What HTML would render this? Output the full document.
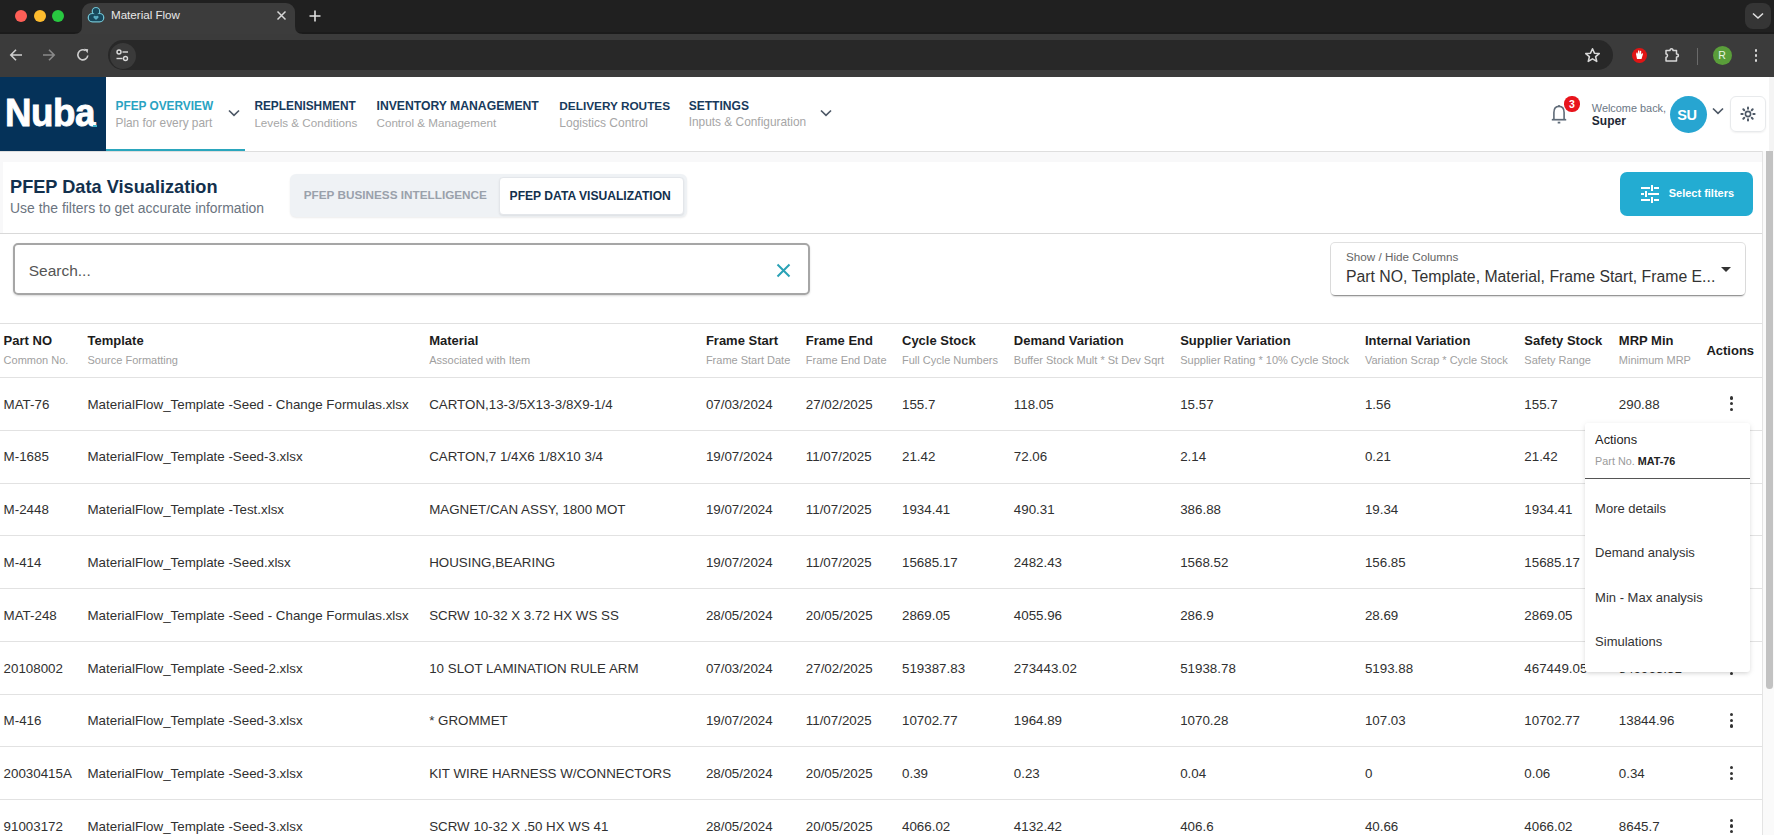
<!DOCTYPE html>
<html><head><meta charset="utf-8"><title>Material Flow</title>
<style>
html,body{margin:0;padding:0;width:1774px;height:835px;overflow:hidden;background:#fff;}
body{position:relative;font-family:"Liberation Sans",sans-serif;}
.t{position:absolute;white-space:nowrap;line-height:1;}
.r{position:absolute;}
svg.r{overflow:visible;}
</style></head><body>
<div class="r" style="left:0px;top:0px;width:1774px;height:34px;background:#202020"></div>
<div class="r" style="left:0px;top:32px;width:1774px;height:2px;background:#1b1b1b"></div>
<div class="r" style="left:15px;top:10px;width:12px;height:12px;background:#ff5f57;border-radius:50%"></div>
<div class="r" style="left:33.5px;top:10px;width:12px;height:12px;background:#febc2e;border-radius:50%"></div>
<div class="r" style="left:52px;top:10px;width:12px;height:12px;background:#28c840;border-radius:50%"></div>
<div class="r" style="left:82px;top:3px;width:213px;height:35px;background:#3c3c3c;border-radius:9px 9px 0 0"></div>
<svg class="r" style="left:74px;top:26px" width="8" height="8"><path d="M0 8 Q8 8 8 0 L8 8 Z" fill="#3c3c3c"/></svg>
<svg class="r" style="left:295px;top:26px" width="8" height="8"><path d="M8 8 Q0 8 0 0 L0 8 Z" fill="#3c3c3c"/></svg>
<svg class="r" style="left:87px;top:7px" width="18" height="16" viewBox="0 0 18 16">
<circle cx="9" cy="4.3" r="3.7" fill="#17485c" stroke="#6fc0d0" stroke-width="1.3"/>
<rect x="1.3" y="6.6" width="15.4" height="8.2" rx="4" fill="#17485c" stroke="#6fc0d0" stroke-width="1.3"/>
<circle cx="9" cy="4.3" r="3" fill="#17485c"/>
<rect x="2" y="7.3" width="14" height="6.8" rx="3.4" fill="#17485c"/>
<circle cx="7.8" cy="10" r="1.3" fill="#5aaec4"/><circle cx="10.2" cy="10" r="1.3" fill="#5aaec4"/>
<path d="M6.6 10.4 L9 13 L11.4 10.4 Z" fill="#5aaec4"/></svg>
<div class="t " style="left:111.00px;top:9.38px;font-size:11.6px;font-weight:400;color:#e8e8e8;">Material Flow</div>
<svg class="r" style="left:276px;top:10px" width="11" height="11"><path d="M1.5 1.5 L9.5 9.5 M9.5 1.5 L1.5 9.5" stroke="#d8d8d8" stroke-width="1.5"/></svg>
<svg class="r" style="left:309px;top:10px" width="12" height="12"><path d="M6 0.5 V11.5 M0.5 6 H11.5" stroke="#e0e0e0" stroke-width="1.6"/></svg>
<div class="r" style="left:1745px;top:3px;width:26px;height:26px;background:#353535;border-radius:8px"></div>
<svg class="r" style="left:1752px;top:12px" width="12" height="8"><path d="M1 1.5 L6 6 L11 1.5" stroke="#e0e0e0" stroke-width="1.6" fill="none"/></svg>
<div class="r" style="left:0px;top:34px;width:1774px;height:43px;background:#3b3b3b"></div>
<div class="r" style="left:108px;top:40px;width:1505px;height:30px;background:#282828;border-radius:15px"></div>
<svg class="r" style="left:9px;top:48px" width="14" height="14"><path d="M13 7 H2 M7 1.8 L1.8 7 L7 12.2" stroke="#cfcfcf" stroke-width="1.6" fill="none"/></svg>
<svg class="r" style="left:42px;top:48px" width="14" height="14"><path d="M1 7 H12 M7 1.8 L12.2 7 L7 12.2" stroke="#8a8a8a" stroke-width="1.6" fill="none"/></svg>
<svg class="r" style="left:76px;top:48px" width="14" height="14"><path d="M11.8 7.5 A5 5 0 1 1 9.5 2.6" stroke="#cfcfcf" stroke-width="1.6" fill="none"/><path d="M8 0.8 L12.2 1.2 L11.6 5.2 Z" fill="#cfcfcf"/></svg>
<div class="r" style="left:109.5px;top:42.5px;width:26px;height:26px;background:#3a3a3a;border-radius:50%"></div>
<svg class="r" style="left:115px;top:48px" width="15" height="15"><circle cx="4" cy="4" r="2" stroke="#dadada" stroke-width="1.4" fill="none"/><path d="M7.5 4 H13" stroke="#dadada" stroke-width="1.4"/><circle cx="10.5" cy="10.5" r="2" stroke="#dadada" stroke-width="1.4" fill="none"/><path d="M1.5 10.5 H7.5" stroke="#dadada" stroke-width="1.4"/></svg>
<svg class="r" style="left:1584px;top:47px" width="17" height="17" viewBox="0 0 24 24"><path d="M12 2.5 L14.8 8.7 L21.5 9.3 L16.4 13.7 L18 20.3 L12 16.8 L6 20.3 L7.6 13.7 L2.5 9.3 L9.2 8.7 Z" stroke="#d8d8d8" stroke-width="2.2" fill="none" stroke-linejoin="round"/></svg>
<div class="r" style="left:1631.5px;top:47.5px;width:15px;height:15px;background:#e01515;border-radius:50%"></div>
<svg class="r" style="left:1634px;top:49px" width="10" height="11"><path d="M3 10 L2 5 L3 3 L4 5 L4 1.5 L5.3 1.5 L5.5 5 L6 1.8 L7.2 2 L7.2 5.5 L8.4 4 L9 5 L7.5 10 Z" fill="#fff"/></svg>
<svg class="r" style="left:1664px;top:46px" width="18" height="18" viewBox="0 0 18 18"><path d="M2 4.5 H6 C6 2 9 2 9 4.5 H12.5 V8 C15 8 15 11 12.5 11 V15 H2 V11.2 C4 11.2 4 8 2 8 Z" stroke="#d8d8d8" stroke-width="1.5" fill="none" stroke-linejoin="round"/></svg>
<div class="r" style="left:1697px;top:48px;width:1px;height:17px;background:#6a6a6a"></div>
<div class="r" style="left:1712.5px;top:45.5px;width:19px;height:19px;background:#5a9e3a;border-radius:50%"></div>
<div class="t " style="left:1718.20px;top:50.41px;font-size:10.5px;font-weight:400;color:#e8f5e0;">R</div>
<div class="r" style="left:1754.5px;top:49px;width:2.6px;height:2.6px;background:#d8d8d8;border-radius:50%"></div>
<div class="r" style="left:1754.5px;top:54px;width:2.6px;height:2.6px;background:#d8d8d8;border-radius:50%"></div>
<div class="r" style="left:1754.5px;top:59px;width:2.6px;height:2.6px;background:#d8d8d8;border-radius:50%"></div>
<div class="r" style="left:0px;top:77px;width:1774px;height:74px;background:#fff"></div>
<div class="r" style="left:0px;top:151px;width:1774px;height:1px;background:#dedede"></div>
<div class="r" style="left:1768.5px;top:77px;width:5.5px;height:74px;background:#f4f4f4"></div>
<div class="r" style="left:0px;top:77px;width:106px;height:74px;background:#053259"></div>
<div class="t " style="left:4.60px;top:93.16px;font-size:39.5px;font-weight:700;color:#fff;letter-spacing:-0.5px;-webkit-text-stroke:0.9px #fff;transform:scaleX(0.93);transform-origin:0 0;">Nuba</div>
<div class="r" style="left:93px;top:124.5px;width:4px;height:2px;background:#3fb3c9"></div>
<div class="t " style="left:115.50px;top:100.97px;font-size:11.85px;font-weight:700;color:#29a3c2;">PFEP OVERVIEW</div>
<div class="t " style="left:115.50px;top:117.77px;font-size:11.85px;font-weight:400;color:#a6a6a6;">Plan for every part</div>
<div class="t " style="left:254.40px;top:100.97px;font-size:11.85px;font-weight:700;color:#173a5c;">REPLENISHMENT</div>
<div class="t " style="left:254.40px;top:117.34px;font-size:11.65px;font-weight:400;color:#a6a6a6;">Levels &amp; Conditions</div>
<div class="t " style="left:376.50px;top:100.17px;font-size:12.2px;font-weight:700;color:#173a5c;">INVENTORY MANAGEMENT</div>
<div class="t " style="left:376.50px;top:117.34px;font-size:11.65px;font-weight:400;color:#a6a6a6;">Control &amp; Management</div>
<div class="t " style="left:559.30px;top:101.01px;font-size:11.8px;font-weight:700;color:#173a5c;">DELIVERY ROUTES</div>
<div class="t " style="left:559.30px;top:117.04px;font-size:12.0px;font-weight:400;color:#a6a6a6;">Logistics Control</div>
<div class="t " style="left:688.70px;top:100.30px;font-size:12.05px;font-weight:700;color:#173a5c;">SETTINGS</div>
<div class="t " style="left:688.70px;top:117.14px;font-size:11.88px;font-weight:400;color:#a6a6a6;">Inputs &amp; Configuration</div>
<div class="r" style="left:106px;top:149px;width:139px;height:2px;background:#2aa6bd"></div>
<svg class="r" style="left:228px;top:109px" width="12" height="8"><path d="M1 1.5 L6 6.3 L11 1.5" stroke="#4d5866" stroke-width="1.7" fill="none"/></svg>
<svg class="r" style="left:820px;top:109px" width="12" height="8"><path d="M1 1.5 L6 6.3 L11 1.5" stroke="#4d5866" stroke-width="1.7" fill="none"/></svg>
<svg class="r" style="left:1551px;top:104px" width="16" height="20" viewBox="0 0 16 20"><path d="M2.9 15.7 V8.6 C2.9 4.9 4.9 2.4 8 2.4 C11.1 2.4 13.1 4.9 13.1 8.6 V15.7" stroke="#5f6b78" stroke-width="1.6" fill="none"/><path d="M0.8 15.7 H15.2" stroke="#5f6b78" stroke-width="1.7"/><path d="M6.7 18.6 H9.3" stroke="#5f6b78" stroke-width="1.8"/><path d="M8 1 V2.6" stroke="#5f6b78" stroke-width="1.6"/></svg>
<div class="r" style="left:1564.4px;top:96.4px;width:15.2px;height:15.2px;background:#e8141c;border-radius:50%"></div>
<div class="t " style="left:1568.90px;top:99.11px;font-size:10.5px;font-weight:700;color:#fff;">3</div>
<div class="t " style="left:1591.80px;top:102.97px;font-size:10.9px;font-weight:400;color:#6b7785;">Welcome back,</div>
<div class="t " style="left:1591.80px;top:114.94px;font-size:12px;font-weight:700;color:#1d2733;">Super</div>
<div class="r" style="left:1670.3px;top:95.8px;width:37.2px;height:37.2px;background:#27a5d1;border-radius:50%"></div>
<div class="t " style="left:1677.20px;top:107.93px;font-size:14.5px;font-weight:700;color:#fff;letter-spacing:-0.3px;">SU</div>
<svg class="r" style="left:1712px;top:107px" width="12" height="8"><path d="M1 1.5 L6 6.3 L11 1.5" stroke="#4d5866" stroke-width="1.7" fill="none"/></svg>
<div class="r" style="left:1730.2px;top:95.8px;width:35.8px;height:36.2px;border:1.5px solid #e8eaec;border-radius:6px;box-sizing:border-box;box-shadow:0 1px 2px rgba(0,0,0,0.06)"></div>
<svg class="r" style="left:1739.1px;top:105.1px" width="18" height="18" viewBox="0 0 18 18"><circle cx="9" cy="9" r="2.6" stroke="#4d5866" stroke-width="1.6" fill="none"/><g stroke="#4d5866" stroke-width="2" stroke-linecap="round"><path d="M14.30 9.00 L15.60 9.00"/><path d="M12.75 12.75 L13.67 13.67"/><path d="M9.00 14.30 L9.00 15.60"/><path d="M5.25 12.75 L4.33 13.67"/><path d="M3.70 9.00 L2.40 9.00"/><path d="M5.25 5.25 L4.33 4.33"/><path d="M9.00 3.70 L9.00 2.40"/><path d="M12.75 5.25 L13.67 4.33"/></g></svg>
<div class="r" style="left:0px;top:152px;width:1762px;height:10px;background:#f8f8f9"></div>
<div class="r" style="left:0px;top:162px;width:1762px;height:71px;background:#fff"></div>
<div class="r" style="left:0px;top:162px;width:3px;height:71px;background:#f8f8f9"></div>
<div class="r" style="left:0px;top:232.5px;width:1762px;height:1.5px;background:#d9d9d9"></div>
<div class="t " style="left:10.00px;top:178.19px;font-size:18.2px;font-weight:700;color:#12304d;">PFEP Data Visualization</div>
<div class="t " style="left:10.00px;top:202.09px;font-size:13.95px;font-weight:400;color:#6b7480;">Use the filters to get accurate information</div>
<div class="r" style="left:289.5px;top:173.5px;width:397px;height:43.5px;background:#eff2f5;border-radius:6px;box-shadow:0 1px 2px rgba(0,0,0,0.08)"></div>
<div class="r" style="left:499px;top:177px;width:184.5px;height:38px;background:#fff;border:1px solid #e3e6ea;box-sizing:border-box;border-radius:4px;box-shadow:0 1px 2px rgba(0,0,0,0.08)"></div>
<div class="t " style="left:303.70px;top:189.45px;font-size:11.75px;font-weight:700;color:#9aa1ab;">PFEP BUSINESS INTELLIGENCE</div>
<div class="t " style="left:509.60px;top:190.26px;font-size:12.1px;font-weight:700;color:#12304d;">PFEP DATA VISUALIZATION</div>
<div class="r" style="left:1620px;top:172px;width:133px;height:44px;background:#23acd2;border-radius:7px"></div>
<svg class="r" style="left:1641px;top:185px" width="18" height="18" viewBox="0 0 18 18"><g stroke="#fff" stroke-width="2"><path d="M0 3 H9 M13 3 H18"/><path d="M11 0 V6"/><path d="M0 9 H3 M7 9 H18"/><path d="M5 6 V12"/><path d="M0 15 H9 M13 15 H18"/><path d="M11 12 V18"/></g></svg>
<div class="t " style="left:1668.70px;top:188.49px;font-size:11px;font-weight:700;color:#fff;">Select filters</div>
<div class="r" style="left:0px;top:234px;width:1762px;height:89px;background:#fff"></div>
<div class="r" style="left:13.2px;top:243.4px;width:797.2px;height:51.6px;border:2px solid #a6a6a6;border-radius:5px;box-sizing:border-box;box-shadow:0 1px 2px rgba(0,0,0,0.15)"></div>
<div class="t " style="left:28.70px;top:262.58px;font-size:15.5px;font-weight:400;color:#555;">Search...</div>
<svg class="r" style="left:776px;top:262.5px" width="15" height="15"><path d="M1.5 1.5 L13.5 13.5 M13.5 1.5 L1.5 13.5" stroke="#2aa2b6" stroke-width="2"/></svg>
<div class="r" style="left:1330.5px;top:242.5px;width:414px;height:52.5px;background:#fff;border-radius:4px;box-shadow:0 2px 2px -1px rgba(0,0,0,0.45),0 0 0 1px rgba(0,0,0,0.12)"></div>
<div class="t " style="left:1346.00px;top:251.40px;font-size:11.7px;font-weight:400;color:#666;">Show / Hide Columns</div>
<div class="t " style="left:1346.00px;top:268.53px;font-size:15.8px;font-weight:400;color:#333;">Part NO, Template, Material, Frame Start, Frame E...</div>
<svg class="r" style="left:1720.5px;top:267px" width="10" height="6"><path d="M0 0 H10 L5 5 Z" fill="#333"/></svg>
<div class="r" style="left:0px;top:323px;width:1762px;height:1px;background:#e0e0e0"></div>
<div class="r" style="left:0px;top:324px;width:1762px;height:511px;background:#fff"></div>
<div class="t " style="left:3.60px;top:334.20px;font-size:13px;font-weight:700;color:#1c1c1c;">Part NO</div>
<div class="t " style="left:3.60px;top:354.69px;font-size:11px;font-weight:400;color:#a0a0a0;">Common No.</div>
<div class="t " style="left:87.50px;top:334.20px;font-size:13px;font-weight:700;color:#1c1c1c;">Template</div>
<div class="t " style="left:87.50px;top:354.69px;font-size:11px;font-weight:400;color:#a0a0a0;">Source Formatting</div>
<div class="t " style="left:429.20px;top:334.20px;font-size:13px;font-weight:700;color:#1c1c1c;">Material</div>
<div class="t " style="left:429.20px;top:354.69px;font-size:11px;font-weight:400;color:#a0a0a0;">Associated with Item</div>
<div class="t " style="left:705.90px;top:334.20px;font-size:13px;font-weight:700;color:#1c1c1c;">Frame Start</div>
<div class="t " style="left:705.90px;top:354.69px;font-size:11px;font-weight:400;color:#a0a0a0;">Frame Start Date</div>
<div class="t " style="left:805.80px;top:334.20px;font-size:13px;font-weight:700;color:#1c1c1c;">Frame End</div>
<div class="t " style="left:805.80px;top:354.69px;font-size:11px;font-weight:400;color:#a0a0a0;">Frame End Date</div>
<div class="t " style="left:902.00px;top:334.20px;font-size:13px;font-weight:700;color:#1c1c1c;">Cycle Stock</div>
<div class="t " style="left:902.00px;top:354.69px;font-size:11px;font-weight:400;color:#a0a0a0;">Full Cycle Numbers</div>
<div class="t " style="left:1013.80px;top:334.20px;font-size:13px;font-weight:700;color:#1c1c1c;">Demand Variation</div>
<div class="t " style="left:1013.80px;top:354.69px;font-size:11px;font-weight:400;color:#a0a0a0;">Buffer Stock Mult * St Dev Sqrt</div>
<div class="t " style="left:1180.20px;top:334.20px;font-size:13px;font-weight:700;color:#1c1c1c;">Supplier Variation</div>
<div class="t " style="left:1180.20px;top:354.69px;font-size:11px;font-weight:400;color:#a0a0a0;">Supplier Rating * 10% Cycle Stock</div>
<div class="t " style="left:1364.90px;top:334.20px;font-size:13px;font-weight:700;color:#1c1c1c;">Internal Variation</div>
<div class="t " style="left:1364.90px;top:354.69px;font-size:11px;font-weight:400;color:#a0a0a0;">Variation Scrap * Cycle Stock</div>
<div class="t " style="left:1524.30px;top:334.20px;font-size:13px;font-weight:700;color:#1c1c1c;">Safety Stock</div>
<div class="t " style="left:1524.30px;top:354.69px;font-size:11px;font-weight:400;color:#a0a0a0;">Safety Range</div>
<div class="t " style="left:1618.80px;top:334.20px;font-size:13px;font-weight:700;color:#1c1c1c;">MRP Min</div>
<div class="t " style="left:1618.80px;top:354.69px;font-size:11px;font-weight:400;color:#a0a0a0;">Minimum MRP</div>
<div class="t " style="left:1706.40px;top:344.20px;font-size:13px;font-weight:700;color:#1c1c1c;">Actions</div>
<div class="r" style="left:0px;top:377px;width:1762px;height:1px;background:#e2e2e2"></div>
<div class="t " style="left:3.60px;top:397.70px;font-size:13.35px;font-weight:400;color:#303030;">MAT-76</div>
<div class="t " style="left:87.50px;top:397.70px;font-size:13.35px;font-weight:400;color:#303030;">MaterialFlow_Template -Seed - Change Formulas.xlsx</div>
<div class="t " style="left:429.20px;top:397.70px;font-size:13.35px;font-weight:400;color:#303030;">CARTON,13-3/5X13-3/8X9-1/4</div>
<div class="t " style="left:705.90px;top:397.70px;font-size:13.35px;font-weight:400;color:#303030;">07/03/2024</div>
<div class="t " style="left:805.80px;top:397.70px;font-size:13.35px;font-weight:400;color:#303030;">27/02/2025</div>
<div class="t " style="left:902.00px;top:397.70px;font-size:13.35px;font-weight:400;color:#303030;">155.7</div>
<div class="t " style="left:1013.80px;top:397.70px;font-size:13.35px;font-weight:400;color:#303030;">118.05</div>
<div class="t " style="left:1180.20px;top:397.70px;font-size:13.35px;font-weight:400;color:#303030;">15.57</div>
<div class="t " style="left:1364.90px;top:397.70px;font-size:13.35px;font-weight:400;color:#303030;">1.56</div>
<div class="t " style="left:1524.30px;top:397.70px;font-size:13.35px;font-weight:400;color:#303030;">155.7</div>
<div class="t " style="left:1618.80px;top:397.70px;font-size:13.35px;font-weight:400;color:#303030;">290.88</div>
<div class="r" style="left:1730.3px;top:396.40000000000003px;width:3.2px;height:3.2px;background:#333;border-radius:50%"></div>
<div class="r" style="left:1730.3px;top:402.1px;width:3.2px;height:3.2px;background:#333;border-radius:50%"></div>
<div class="r" style="left:1730.3px;top:407.8px;width:3.2px;height:3.2px;background:#333;border-radius:50%"></div>
<div class="r" style="left:0;top:429.78px;width:1762px;height:1px;background:#e2e2e2"></div>
<div class="t " style="left:3.60px;top:450.48px;font-size:13.35px;font-weight:400;color:#303030;">M-1685</div>
<div class="t " style="left:87.50px;top:450.48px;font-size:13.35px;font-weight:400;color:#303030;">MaterialFlow_Template -Seed-3.xlsx</div>
<div class="t " style="left:429.20px;top:450.48px;font-size:13.35px;font-weight:400;color:#303030;">CARTON,7 1/4X6 1/8X10 3/4</div>
<div class="t " style="left:705.90px;top:450.48px;font-size:13.35px;font-weight:400;color:#303030;">19/07/2024</div>
<div class="t " style="left:805.80px;top:450.48px;font-size:13.35px;font-weight:400;color:#303030;">11/07/2025</div>
<div class="t " style="left:902.00px;top:450.48px;font-size:13.35px;font-weight:400;color:#303030;">21.42</div>
<div class="t " style="left:1013.80px;top:450.48px;font-size:13.35px;font-weight:400;color:#303030;">72.06</div>
<div class="t " style="left:1180.20px;top:450.48px;font-size:13.35px;font-weight:400;color:#303030;">2.14</div>
<div class="t " style="left:1364.90px;top:450.48px;font-size:13.35px;font-weight:400;color:#303030;">0.21</div>
<div class="t " style="left:1524.30px;top:450.48px;font-size:13.35px;font-weight:400;color:#303030;">21.42</div>
<div class="t " style="left:1618.80px;top:450.48px;font-size:13.35px;font-weight:400;color:#303030;">95.83</div>
<div class="r" style="left:1730.3px;top:449.18px;width:3.2px;height:3.2px;background:#333;border-radius:50%"></div>
<div class="r" style="left:1730.3px;top:454.88px;width:3.2px;height:3.2px;background:#333;border-radius:50%"></div>
<div class="r" style="left:1730.3px;top:460.58px;width:3.2px;height:3.2px;background:#333;border-radius:50%"></div>
<div class="r" style="left:0;top:482.56px;width:1762px;height:1px;background:#e2e2e2"></div>
<div class="t " style="left:3.60px;top:503.26px;font-size:13.35px;font-weight:400;color:#303030;">M-2448</div>
<div class="t " style="left:87.50px;top:503.26px;font-size:13.35px;font-weight:400;color:#303030;">MaterialFlow_Template -Test.xlsx</div>
<div class="t " style="left:429.20px;top:503.26px;font-size:13.35px;font-weight:400;color:#303030;">MAGNET/CAN ASSY, 1800 MOT</div>
<div class="t " style="left:705.90px;top:503.26px;font-size:13.35px;font-weight:400;color:#303030;">19/07/2024</div>
<div class="t " style="left:805.80px;top:503.26px;font-size:13.35px;font-weight:400;color:#303030;">11/07/2025</div>
<div class="t " style="left:902.00px;top:503.26px;font-size:13.35px;font-weight:400;color:#303030;">1934.41</div>
<div class="t " style="left:1013.80px;top:503.26px;font-size:13.35px;font-weight:400;color:#303030;">490.31</div>
<div class="t " style="left:1180.20px;top:503.26px;font-size:13.35px;font-weight:400;color:#303030;">386.88</div>
<div class="t " style="left:1364.90px;top:503.26px;font-size:13.35px;font-weight:400;color:#303030;">19.34</div>
<div class="t " style="left:1524.30px;top:503.26px;font-size:13.35px;font-weight:400;color:#303030;">1934.41</div>
<div class="t " style="left:1618.80px;top:503.26px;font-size:13.35px;font-weight:400;color:#303030;">2830.94</div>
<div class="r" style="left:1730.3px;top:501.96px;width:3.2px;height:3.2px;background:#333;border-radius:50%"></div>
<div class="r" style="left:1730.3px;top:507.65999999999997px;width:3.2px;height:3.2px;background:#333;border-radius:50%"></div>
<div class="r" style="left:1730.3px;top:513.36px;width:3.2px;height:3.2px;background:#333;border-radius:50%"></div>
<div class="r" style="left:0;top:535.34px;width:1762px;height:1px;background:#e2e2e2"></div>
<div class="t " style="left:3.60px;top:556.04px;font-size:13.35px;font-weight:400;color:#303030;">M-414</div>
<div class="t " style="left:87.50px;top:556.04px;font-size:13.35px;font-weight:400;color:#303030;">MaterialFlow_Template -Seed.xlsx</div>
<div class="t " style="left:429.20px;top:556.04px;font-size:13.35px;font-weight:400;color:#303030;">HOUSING,BEARING</div>
<div class="t " style="left:705.90px;top:556.04px;font-size:13.35px;font-weight:400;color:#303030;">19/07/2024</div>
<div class="t " style="left:805.80px;top:556.04px;font-size:13.35px;font-weight:400;color:#303030;">11/07/2025</div>
<div class="t " style="left:902.00px;top:556.04px;font-size:13.35px;font-weight:400;color:#303030;">15685.17</div>
<div class="t " style="left:1013.80px;top:556.04px;font-size:13.35px;font-weight:400;color:#303030;">2482.43</div>
<div class="t " style="left:1180.20px;top:556.04px;font-size:13.35px;font-weight:400;color:#303030;">1568.52</div>
<div class="t " style="left:1364.90px;top:556.04px;font-size:13.35px;font-weight:400;color:#303030;">156.85</div>
<div class="t " style="left:1524.30px;top:556.04px;font-size:13.35px;font-weight:400;color:#303030;">15685.17</div>
<div class="t " style="left:1618.80px;top:556.04px;font-size:13.35px;font-weight:400;color:#303030;">19892.97</div>
<div class="r" style="left:1730.3px;top:554.74px;width:3.2px;height:3.2px;background:#333;border-radius:50%"></div>
<div class="r" style="left:1730.3px;top:560.44px;width:3.2px;height:3.2px;background:#333;border-radius:50%"></div>
<div class="r" style="left:1730.3px;top:566.1400000000001px;width:3.2px;height:3.2px;background:#333;border-radius:50%"></div>
<div class="r" style="left:0;top:588.12px;width:1762px;height:1px;background:#e2e2e2"></div>
<div class="t " style="left:3.60px;top:608.82px;font-size:13.35px;font-weight:400;color:#303030;">MAT-248</div>
<div class="t " style="left:87.50px;top:608.82px;font-size:13.35px;font-weight:400;color:#303030;">MaterialFlow_Template -Seed - Change Formulas.xlsx</div>
<div class="t " style="left:429.20px;top:608.82px;font-size:13.35px;font-weight:400;color:#303030;">SCRW 10-32 X 3.72 HX WS SS</div>
<div class="t " style="left:705.90px;top:608.82px;font-size:13.35px;font-weight:400;color:#303030;">28/05/2024</div>
<div class="t " style="left:805.80px;top:608.82px;font-size:13.35px;font-weight:400;color:#303030;">20/05/2025</div>
<div class="t " style="left:902.00px;top:608.82px;font-size:13.35px;font-weight:400;color:#303030;">2869.05</div>
<div class="t " style="left:1013.80px;top:608.82px;font-size:13.35px;font-weight:400;color:#303030;">4055.96</div>
<div class="t " style="left:1180.20px;top:608.82px;font-size:13.35px;font-weight:400;color:#303030;">286.9</div>
<div class="t " style="left:1364.90px;top:608.82px;font-size:13.35px;font-weight:400;color:#303030;">28.69</div>
<div class="t " style="left:1524.30px;top:608.82px;font-size:13.35px;font-weight:400;color:#303030;">2869.05</div>
<div class="t " style="left:1618.80px;top:608.82px;font-size:13.35px;font-weight:400;color:#303030;">7240.6</div>
<div class="r" style="left:1730.3px;top:607.52px;width:3.2px;height:3.2px;background:#333;border-radius:50%"></div>
<div class="r" style="left:1730.3px;top:613.22px;width:3.2px;height:3.2px;background:#333;border-radius:50%"></div>
<div class="r" style="left:1730.3px;top:618.9200000000001px;width:3.2px;height:3.2px;background:#333;border-radius:50%"></div>
<div class="r" style="left:0;top:640.90px;width:1762px;height:1px;background:#e2e2e2"></div>
<div class="t " style="left:3.60px;top:661.60px;font-size:13.35px;font-weight:400;color:#303030;">20108002</div>
<div class="t " style="left:87.50px;top:661.60px;font-size:13.35px;font-weight:400;color:#303030;">MaterialFlow_Template -Seed-2.xlsx</div>
<div class="t " style="left:429.20px;top:661.60px;font-size:13.35px;font-weight:400;color:#303030;">10 SLOT LAMINATION RULE ARM</div>
<div class="t " style="left:705.90px;top:661.60px;font-size:13.35px;font-weight:400;color:#303030;">07/03/2024</div>
<div class="t " style="left:805.80px;top:661.60px;font-size:13.35px;font-weight:400;color:#303030;">27/02/2025</div>
<div class="t " style="left:902.00px;top:661.60px;font-size:13.35px;font-weight:400;color:#303030;">519387.83</div>
<div class="t " style="left:1013.80px;top:661.60px;font-size:13.35px;font-weight:400;color:#303030;">273443.02</div>
<div class="t " style="left:1180.20px;top:661.60px;font-size:13.35px;font-weight:400;color:#303030;">51938.78</div>
<div class="t " style="left:1364.90px;top:661.60px;font-size:13.35px;font-weight:400;color:#303030;">5193.88</div>
<div class="t " style="left:1524.30px;top:661.60px;font-size:13.35px;font-weight:400;color:#303030;">467449.05</div>
<div class="t " style="left:1618.80px;top:661.60px;font-size:13.35px;font-weight:400;color:#303030;">849963.51</div>
<div class="r" style="left:1730.3px;top:660.3px;width:3.2px;height:3.2px;background:#333;border-radius:50%"></div>
<div class="r" style="left:1730.3px;top:666.0px;width:3.2px;height:3.2px;background:#333;border-radius:50%"></div>
<div class="r" style="left:1730.3px;top:671.7px;width:3.2px;height:3.2px;background:#333;border-radius:50%"></div>
<div class="r" style="left:0;top:693.68px;width:1762px;height:1px;background:#e2e2e2"></div>
<div class="t " style="left:3.60px;top:714.38px;font-size:13.35px;font-weight:400;color:#303030;">M-416</div>
<div class="t " style="left:87.50px;top:714.38px;font-size:13.35px;font-weight:400;color:#303030;">MaterialFlow_Template -Seed-3.xlsx</div>
<div class="t " style="left:429.20px;top:714.38px;font-size:13.35px;font-weight:400;color:#303030;">* GROMMET</div>
<div class="t " style="left:705.90px;top:714.38px;font-size:13.35px;font-weight:400;color:#303030;">19/07/2024</div>
<div class="t " style="left:805.80px;top:714.38px;font-size:13.35px;font-weight:400;color:#303030;">11/07/2025</div>
<div class="t " style="left:902.00px;top:714.38px;font-size:13.35px;font-weight:400;color:#303030;">10702.77</div>
<div class="t " style="left:1013.80px;top:714.38px;font-size:13.35px;font-weight:400;color:#303030;">1964.89</div>
<div class="t " style="left:1180.20px;top:714.38px;font-size:13.35px;font-weight:400;color:#303030;">1070.28</div>
<div class="t " style="left:1364.90px;top:714.38px;font-size:13.35px;font-weight:400;color:#303030;">107.03</div>
<div class="t " style="left:1524.30px;top:714.38px;font-size:13.35px;font-weight:400;color:#303030;">10702.77</div>
<div class="t " style="left:1618.80px;top:714.38px;font-size:13.35px;font-weight:400;color:#303030;">13844.96</div>
<div class="r" style="left:1730.3px;top:713.08px;width:3.2px;height:3.2px;background:#333;border-radius:50%"></div>
<div class="r" style="left:1730.3px;top:718.7800000000001px;width:3.2px;height:3.2px;background:#333;border-radius:50%"></div>
<div class="r" style="left:1730.3px;top:724.4800000000001px;width:3.2px;height:3.2px;background:#333;border-radius:50%"></div>
<div class="r" style="left:0;top:746.46px;width:1762px;height:1px;background:#e2e2e2"></div>
<div class="t " style="left:3.60px;top:767.16px;font-size:13.35px;font-weight:400;color:#303030;">20030415A</div>
<div class="t " style="left:87.50px;top:767.16px;font-size:13.35px;font-weight:400;color:#303030;">MaterialFlow_Template -Seed-3.xlsx</div>
<div class="t " style="left:429.20px;top:767.16px;font-size:13.35px;font-weight:400;color:#303030;">KIT WIRE HARNESS W/CONNECTORS</div>
<div class="t " style="left:705.90px;top:767.16px;font-size:13.35px;font-weight:400;color:#303030;">28/05/2024</div>
<div class="t " style="left:805.80px;top:767.16px;font-size:13.35px;font-weight:400;color:#303030;">20/05/2025</div>
<div class="t " style="left:902.00px;top:767.16px;font-size:13.35px;font-weight:400;color:#303030;">0.39</div>
<div class="t " style="left:1013.80px;top:767.16px;font-size:13.35px;font-weight:400;color:#303030;">0.23</div>
<div class="t " style="left:1180.20px;top:767.16px;font-size:13.35px;font-weight:400;color:#303030;">0.04</div>
<div class="t " style="left:1364.90px;top:767.16px;font-size:13.35px;font-weight:400;color:#303030;">0</div>
<div class="t " style="left:1524.30px;top:767.16px;font-size:13.35px;font-weight:400;color:#303030;">0.06</div>
<div class="t " style="left:1618.80px;top:767.16px;font-size:13.35px;font-weight:400;color:#303030;">0.34</div>
<div class="r" style="left:1730.3px;top:765.86px;width:3.2px;height:3.2px;background:#333;border-radius:50%"></div>
<div class="r" style="left:1730.3px;top:771.5600000000001px;width:3.2px;height:3.2px;background:#333;border-radius:50%"></div>
<div class="r" style="left:1730.3px;top:777.2600000000001px;width:3.2px;height:3.2px;background:#333;border-radius:50%"></div>
<div class="r" style="left:0;top:799.24px;width:1762px;height:1px;background:#e2e2e2"></div>
<div class="t " style="left:3.60px;top:819.94px;font-size:13.35px;font-weight:400;color:#303030;">91003172</div>
<div class="t " style="left:87.50px;top:819.94px;font-size:13.35px;font-weight:400;color:#303030;">MaterialFlow_Template -Seed-3.xlsx</div>
<div class="t " style="left:429.20px;top:819.94px;font-size:13.35px;font-weight:400;color:#303030;">SCRW 10-32 X .50 HX WS 41</div>
<div class="t " style="left:705.90px;top:819.94px;font-size:13.35px;font-weight:400;color:#303030;">28/05/2024</div>
<div class="t " style="left:805.80px;top:819.94px;font-size:13.35px;font-weight:400;color:#303030;">20/05/2025</div>
<div class="t " style="left:902.00px;top:819.94px;font-size:13.35px;font-weight:400;color:#303030;">4066.02</div>
<div class="t " style="left:1013.80px;top:819.94px;font-size:13.35px;font-weight:400;color:#303030;">4132.42</div>
<div class="t " style="left:1180.20px;top:819.94px;font-size:13.35px;font-weight:400;color:#303030;">406.6</div>
<div class="t " style="left:1364.90px;top:819.94px;font-size:13.35px;font-weight:400;color:#303030;">40.66</div>
<div class="t " style="left:1524.30px;top:819.94px;font-size:13.35px;font-weight:400;color:#303030;">4066.02</div>
<div class="t " style="left:1618.80px;top:819.94px;font-size:13.35px;font-weight:400;color:#303030;">8645.7</div>
<div class="r" style="left:1730.3px;top:818.64px;width:3.2px;height:3.2px;background:#333;border-radius:50%"></div>
<div class="r" style="left:1730.3px;top:824.34px;width:3.2px;height:3.2px;background:#333;border-radius:50%"></div>
<div class="r" style="left:1730.3px;top:830.0400000000001px;width:3.2px;height:3.2px;background:#333;border-radius:50%"></div>
<div class="r" style="left:0;top:852.02px;width:1762px;height:1px;background:#e2e2e2"></div>
<div class="r" style="left:1584.8px;top:423px;width:165.2px;height:249.2px;background:#fff;border-radius:3px;box-shadow:0 2px 4px -1px rgba(0,0,0,0.12),0 1px 6px 0 rgba(0,0,0,0.08)"></div>
<div class="t " style="left:1595.10px;top:433.56px;font-size:12.8px;font-weight:400;color:#222;">Actions</div>
<div class="t " style="left:1595.10px;top:455.66px;font-size:10.8px;font-weight:400;color:#9a9a9a;">Part No. <b style="color:#222">MAT-76</b></div>
<div class="r" style="left:1584.8px;top:478px;width:165.2px;height:1px;background:#555"></div>
<div class="t " style="left:1595.10px;top:502.00px;font-size:13px;font-weight:400;color:#333;">More details</div>
<div class="t " style="left:1595.10px;top:546.47px;font-size:13px;font-weight:400;color:#333;">Demand analysis</div>
<div class="t " style="left:1595.10px;top:590.94px;font-size:13px;font-weight:400;color:#333;">Min - Max analysis</div>
<div class="t " style="left:1595.10px;top:635.41px;font-size:13px;font-weight:400;color:#333;">Simulations</div>
<div class="r" style="left:1762px;top:151px;width:12px;height:684px;background:#fafafa;border-left:1px solid #e4e4e4;box-sizing:border-box"></div>
<div class="r" style="left:1766.3px;top:151px;width:7.2px;height:537.5px;background:#c2c2c2;border-radius:0 0 4px 4px"></div>
</body></html>
